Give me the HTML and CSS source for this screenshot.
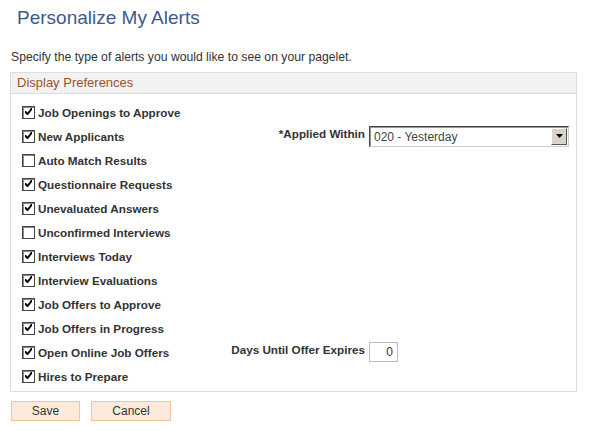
FILE: index.html
```html
<!DOCTYPE html>
<html lang="en">
<head>
    <meta charset="UTF-8">
    <title>Personalize My Alerts</title>
    <link rel="stylesheet" href="styles.css">
</head>
<body>
    <div class="page">
        <h1 class="titulo">Personalize My Alerts</h1>
        <p class="instrucao">Specify the type of alerts you would like to see on your pagelet.</p>

        <div class="grupo">
            <div class="grupo-cabecalho">Display Preferences</div>
            <div class="grupo-corpo">
                <label class="opcao"><span class="caixa marcada"></span>Job Openings to Approve</label>
                <span></span><span></span>

                <label class="opcao"><span class="caixa marcada"></span>New Applicants</label>
                <span class="rotulo">*Applied Within</span>
                <div class="lista">
                    <span class="lista-valor">020 - Yesterday</span>
                    <span class="lista-botao"><svg width="9" height="5" viewBox="0 0 9 5"><path d="M1 0h7L4.5 4z" fill="#000"/></svg></span>
                </div>

                <label class="opcao"><span class="caixa"></span>Auto Match Results</label>
                <span></span><span></span>

                <label class="opcao"><span class="caixa marcada"></span>Questionnaire Requests</label>
                <span></span><span></span>

                <label class="opcao"><span class="caixa marcada"></span>Unevaluated Answers</label>
                <span></span><span></span>

                <label class="opcao"><span class="caixa"></span>Unconfirmed Interviews</label>
                <span></span><span></span>

                <label class="opcao"><span class="caixa marcada"></span>Interviews Today</label>
                <span></span><span></span>

                <label class="opcao"><span class="caixa marcada"></span>Interview Evaluations</label>
                <span></span><span></span>

                <label class="opcao"><span class="caixa marcada"></span>Job Offers to Approve</label>
                <span></span><span></span>

                <label class="opcao"><span class="caixa marcada"></span>Job Offers in Progress</label>
                <span></span><span></span>

                <label class="opcao"><span class="caixa marcada"></span>Open Online Job Offers</label>
                <span class="rotulo">Days Until Offer Expires</span>
                <div class="numero">0</div>

                <label class="opcao"><span class="caixa marcada"></span>Hires to Prepare</label>
                <span></span><span></span>
            </div>
        </div>

        <div class="botoes">
            <button class="botao">Save</button>
            <button class="botao botao-largo">Cancel</button>
        </div>
    </div>
</body>
</html>
```

FILE: styles.css
```css
body {
    margin: 0;
    font-family: "Liberation Sans", Arial, sans-serif;
    font-size: 12px;
    color: #333;
    background-color: #fff;
}
.page {
    padding: 7px 0 0 10px;
    width: 567px;
}
.titulo {
    margin: 0 0 0 7px;
    font-size: 19px;
    font-weight: normal;
    color: #3c5a8c;
    line-height: 22px;
}
.instrucao {
    margin: 21px 0 0 1px;
    font-size: 12.2px;
    line-height: 14px;
}
.grupo {
    margin-top: 8px;
    border: 1px solid #ddd;
}
.grupo-cabecalho {
    height: 20px;
    line-height: 20px;
    padding-left: 6px;
    font-size: 13px;
    color: #a0512a;
    background-color: #f1f3f3;
    border-bottom: 1px solid #ddd;
}
.grupo-corpo {
    display: grid;
    grid-template-columns: 190px 157px 1fr;
    grid-auto-rows: 24px;
    padding: 6px 0 3px 11px;
}
.opcao {
    display: flex;
    align-items: center;
    gap: 3px;
    font-size: 11.7px;
    font-weight: bold;
    color: #333;
    white-space: nowrap;
}
.caixa {
    width: 11px;
    height: 11px;
    border: 1px solid #444;
    box-shadow: inset 1px 1px 0 #888;
    background: #fff;
    position: relative;
}
.caixa.marcada::after {
    content: "";
    position: absolute;
    left: 2px;
    top: 1px;
    width: 7px;
    height: 8px;
    background: url("data:image/svg+xml,%3Csvg xmlns='http://www.w3.org/2000/svg' width='7' height='8' viewBox='0 0 7 8'%3E%3Cpath d='M0 3v2l2 2h1l4-5V0h-1L2.5 4.5 1 3z' fill='%23000'/%3E%3C/svg%3E") no-repeat;
}
.rotulo {
    text-align: right;
    font-size: 11.7px;
    font-weight: bold;
    white-space: nowrap;
    padding-top: 3px;
    padding-right: 4px;
}
.lista {
    display: flex;
    align-self: center;
    width: 198px;
    height: 19px;
    border: 1px solid #444;
    border-right-color: #ccc;
    border-bottom-color: #ccc;
    box-shadow: inset 1px 1px 0 #999;
}
.lista-valor {
    flex: 1;
    padding: 3px 0 0 4px;
    color: #444;
}
.lista-botao {
    width: 14px;
    height: 15px;
    margin: 1px 1px 0 0;
    background: #d8d4cc;
    border: 1px solid #fff;
    border-right-color: #555;
    border-bottom-color: #555;
    display: flex;
    align-items: center;
    justify-content: center;
}
.numero {
    align-self: center;
    width: 23px;
    height: 18px;
    line-height: 18px;
    padding-right: 4px;
    text-align: right;
    border: 1px solid #bbb;
    color: #333;
}
.botoes {
    display: flex;
    gap: 11px;
    margin-top: 9px;
    margin-left: 1px;
}
.botao {
    width: 69px;
    height: 20px;
    padding: 0;
    font-family: inherit;
    font-size: 12px;
    color: #333;
    background-color: #fcebdc;
    border: 1px solid #e9c7a5;
}
.botao-largo {
    width: 80px;
}
```
